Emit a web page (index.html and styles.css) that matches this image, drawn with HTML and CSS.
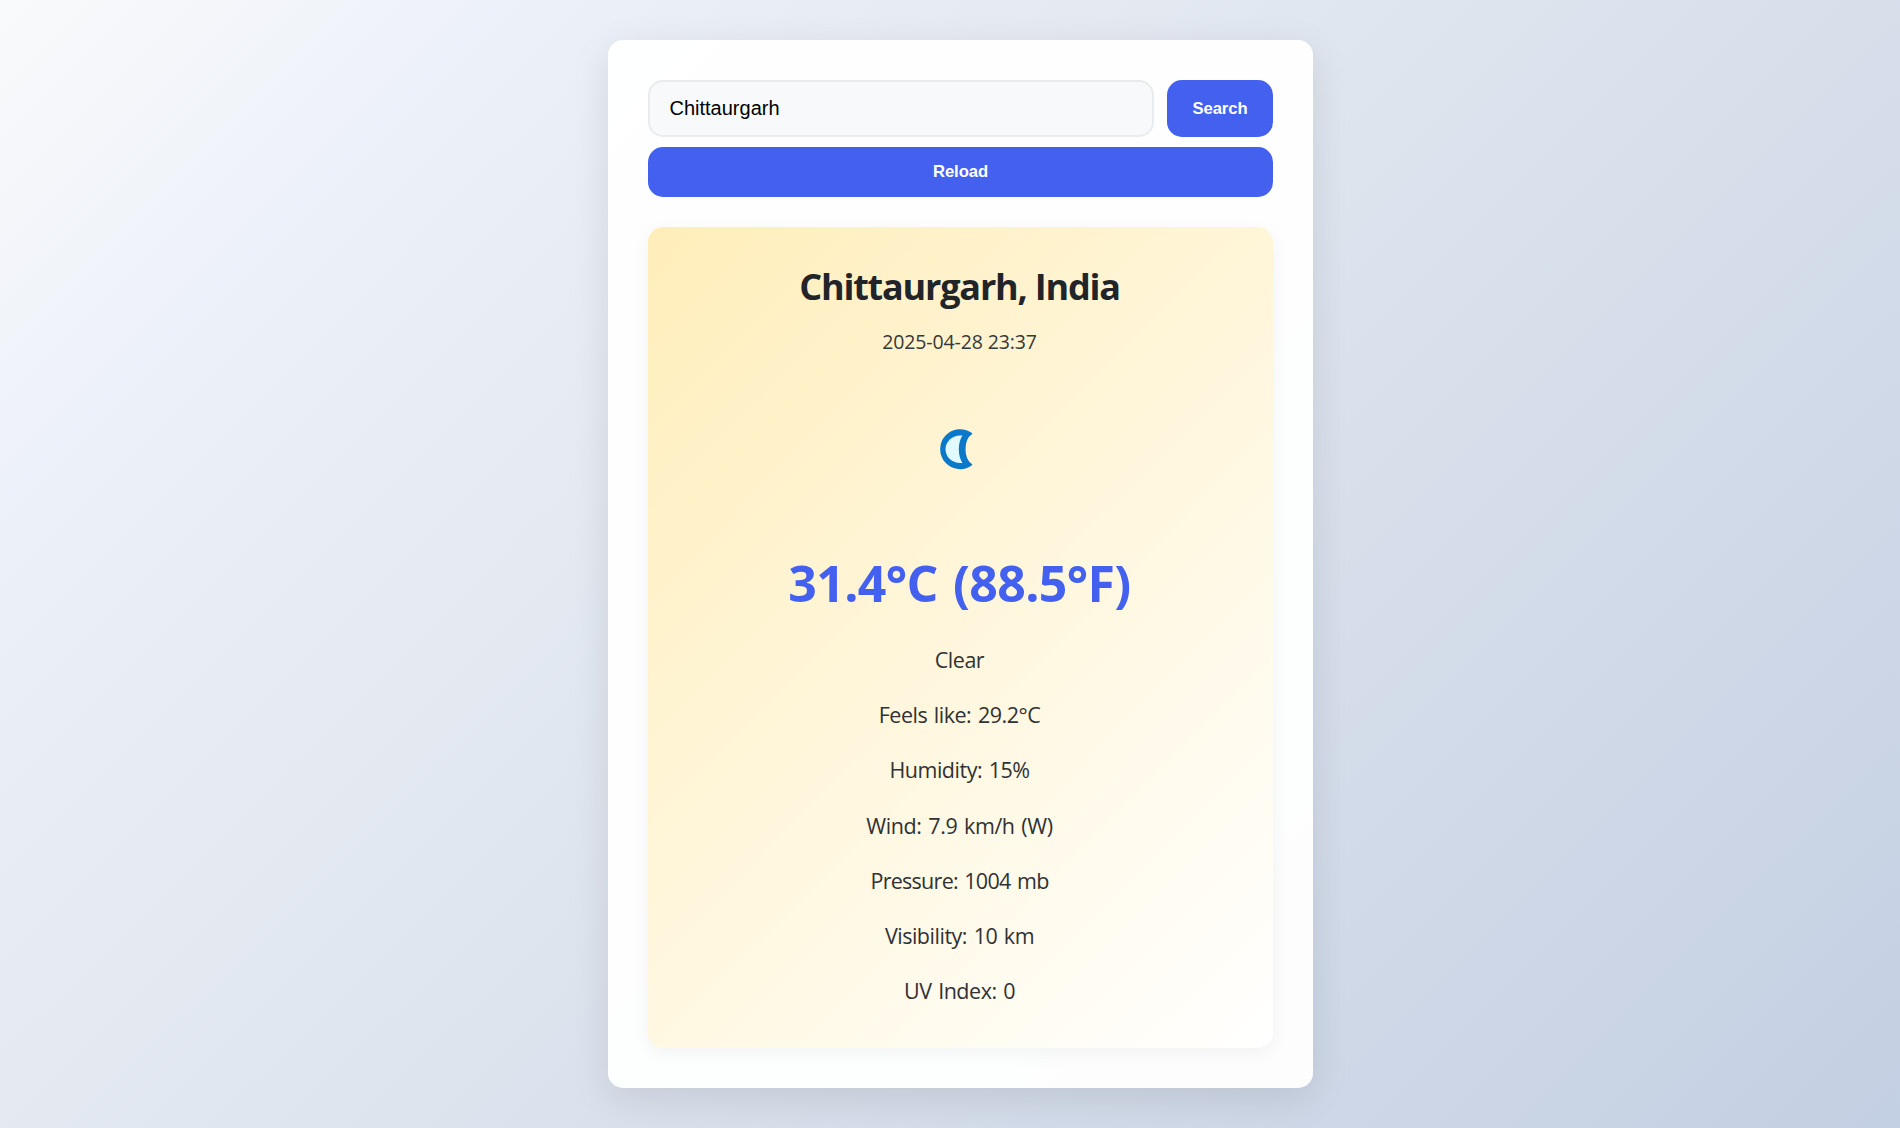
FILE: index.html
```html
<!DOCTYPE html>
<html lang="en">
<head>
<meta charset="utf-8">
<title>Weather</title>
<link rel="stylesheet" href="styles.css">
</head>
<body>
<main class="container">
  <form class="search">
    <input class="search-input" type="text" value="Chittaurgarh" spellcheck="false" aria-label="City">
    <button class="button" type="button">Search</button>
  </form>
  <button class="button reload" type="button">Reload</button>
  <section class="weather">
    <h1 class="place">Chittaurgarh, India</h1>
    <p class="time">2025-04-28 23:37</p>
    <svg class="icon" viewBox="0 0 80 80" aria-hidden="true">
      <path d="M51.500 24.700A19.200 19.200 0 1 0 51.500 55.700C42.500 50 42.500 30.500 51.500 24.700Z" fill="#0b78ca" stroke="#0b78ca" stroke-width="1.600" stroke-linejoin="round"/>
      <path d="M42.500 26.600C32 25.500 25.500 33 25.500 40.300S32 55 42.500 54C37.600 47 37.600 33.500 42.500 26.600Z" fill="#e0faff"/>
    </svg>
    <p class="temperature">31.4°C (88.5°F)</p>
    <ul class="details">
      <li class="clear">Clear</li>
      <li class="feels">Feels like: 29.2°C</li>
      <li class="humidity">Humidity: 15%</li>
      <li class="wind">Wind: 7.9 km/h (W)</li>
      <li class="pressure">Pressure: 1004 mb</li>
      <li class="visibility">Visibility: 10 km</li>
      <li class="uv">UV Index: 0</li>
    </ul>
  </section>
</main>
</body>
</html>
```
FILE: styles.css
```css
* { box-sizing: border-box; margin: 0; }
body {
  min-height: 100vh;
  padding: 40px 0;
  display: flex;
  justify-content: center;
  align-items: center;
  color: #212529;
  font-family: "Open Sans", "Noto Sans", sans-serif;
  background: linear-gradient(135deg, #f9fafb 0%, #ecf0f8 18%, #e0e6ef 45%, #c3cfe2 100%);
}
.container {
  width: 705px;
  height: 1048px;
  margin-left: 21px;
  padding: 40px;
  display: flex;
  flex-direction: column;
  border-radius: 15px;
  background: rgba(255, 255, 255, .95);
  box-shadow: 0 10px 38px rgba(0, 0, 0, .1);
}
.search { display: flex; gap: 13px; height: 57px; }
.search-input {
  flex: 1;
  min-width: 0;
  padding: 0 19.5px;
  border: 2px solid #e9ecef;
  border-radius: 15px;
  background: #f8f9fa;
  color: #000;
  font: 20px "Liberation Sans", Arial, sans-serif;
}
.button {
  width: 106px;
  border: 0;
  border-radius: 15px;
  background: #4361ee;
  color: #fff;
  font: bold 16.67px "Liberation Sans", Arial, sans-serif;
  letter-spacing: -.1px;
}
.reload { width: 100%; height: 50px; margin-top: 10px; }
.weather {
  height: 821px;
  margin-top: 30px;
  padding: 31px 2px 0 0;
  display: flex;
  flex-direction: column;
  align-items: center;
  border-radius: 15px;
  background: linear-gradient(135deg, #ffeeba 0%, #fff 100%);
  box-shadow: 0 5px 19px rgba(0, 0, 0, .05);
}
.place { font-size: 36px; line-height: 58px; font-weight: 700; letter-spacing: -1.2px; }
.time { margin-top: 11px; font-size: 19.5px; line-height: 30px; color: #37383a; letter-spacing: -.12px; }
.icon { width: 80px; height: 80px; margin-top: 52px; }
.temperature {
  margin-top: 54px;
  font-size: 50px;
  line-height: 80px;
  font-weight: 700;
  color: #4361ee;
  letter-spacing: -.65px;
  word-spacing: 3px;
}
.details {
  padding: 0;
  list-style: none;
  text-align: center;
  margin-top: 9px;
  font-size: 21.5px;
  line-height: 55.2px;
  letter-spacing: -.48px;
  word-spacing: 1.5px;
  color: #303234;
}
.wind { letter-spacing: -.4px; }
.pressure { letter-spacing: -.72px; }
```
